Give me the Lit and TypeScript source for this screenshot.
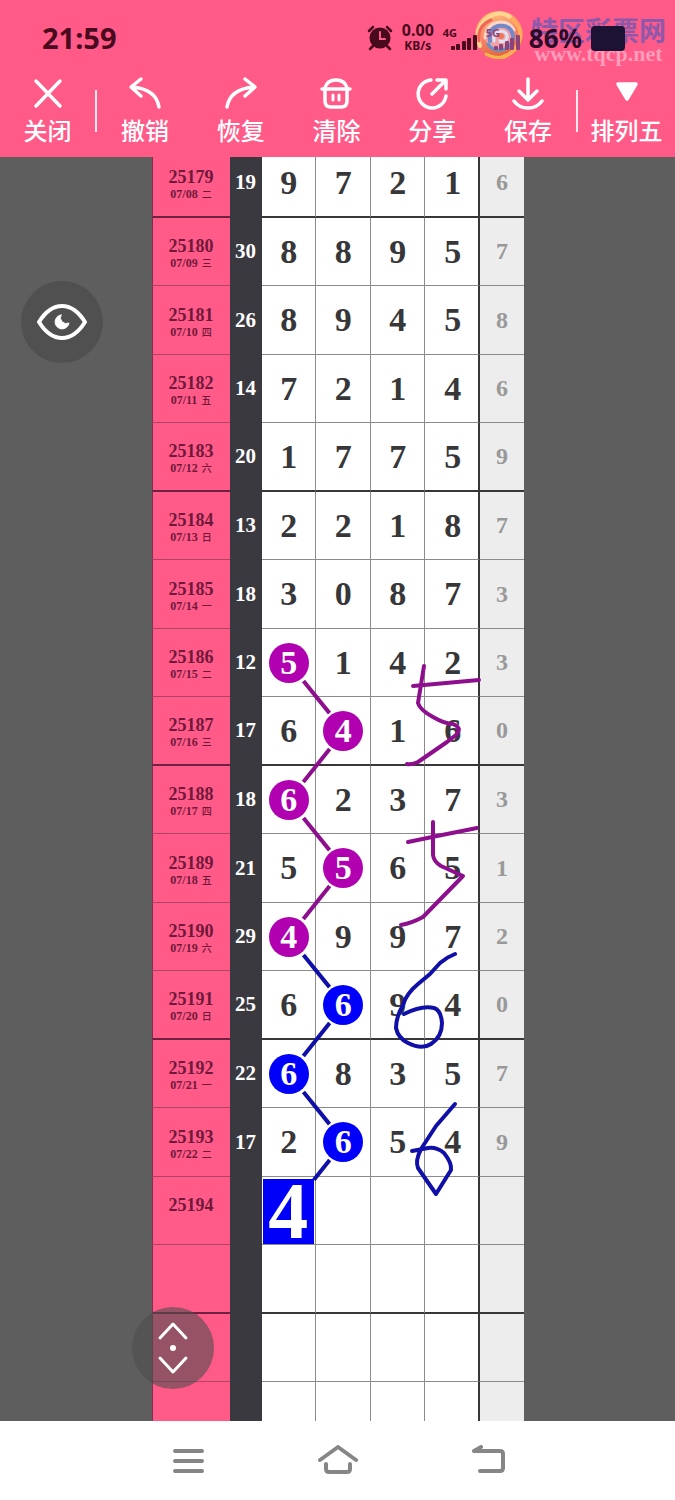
import { LitElement, html, svg, css, nothing } from 'lit';
import { customElement, property } from 'lit/decorators.js';

type Mark = { col: number; tone: 'purple' | 'blue'; box?: boolean };

interface Draw {
  issue: string;
  date: string;
  day: string;
  sum: string;
  digits: string;
  tail: string;
  mark?: Mark;
}

const draw = (issue: string, date: string, day: string, sum: string, digits: string, tail: string, mark?: Mark): Draw =>
  ({ issue, date, day, sum, digits, tail, mark });

const DRAWS: Draw[] = [
  draw('25179', '07/08', '二', '19', '9721', '6'),
  draw('25180', '07/09', '三', '30', '8895', '7'),
  draw('25181', '07/10', '四', '26', '8945', '8'),
  draw('25182', '07/11', '五', '14', '7214', '6'),
  draw('25183', '07/12', '六', '20', '1775', '9'),
  draw('25184', '07/13', '日', '13', '2218', '7'),
  draw('25185', '07/14', '一', '18', '3087', '3'),
  draw('25186', '07/15', '二', '12', '5142', '3', { col: 0, tone: 'purple' }),
  draw('25187', '07/16', '三', '17', '6416', '0', { col: 1, tone: 'purple' }),
  draw('25188', '07/17', '四', '18', '6237', '3', { col: 0, tone: 'purple' }),
  draw('25189', '07/18', '五', '21', '5565', '1', { col: 1, tone: 'purple' }),
  draw('25190', '07/19', '六', '29', '4997', '2', { col: 0, tone: 'purple' }),
  draw('25191', '07/20', '日', '25', '6694', '0', { col: 1, tone: 'blue' }),
  draw('25192', '07/21', '一', '22', '6835', '7', { col: 0, tone: 'blue' }),
  draw('25193', '07/22', '二', '17', '2654', '9', { col: 1, tone: 'blue' }),
  draw('25194', '', '', '', '4', '', { col: 0, tone: 'blue', box: true }),
  draw('', '', '', '', '', ''),
  draw('', '', '', '', '', ''),
  draw('', '', '', '', '', ''),
];

const CHART_WIDTH = 372;
const CHART_HEIGHT = 1302;

// Freehand strokes, in chart coordinates
const INK = [
  { tone: 'purple', d: 'M272 517L266 554Q268 561 281 568Q293 575 301 575Q311 579 304 586L295 593L266 613Q260 616 255 615' },
  { tone: 'purple', d: 'M261 537L327 531' },
  { tone: 'purple', d: 'M281 673V706Q282 713 289 717L311 727L271 768Q260 774 249 776' },
  { tone: 'purple', d: 'M256 693L285 687L325 679' },
  { tone: 'blue', d: 'M303 805Q295 808 288 814L278 825L266 835Q254 845 251 856Q244 868 244 879Q246 889 256 894Q270 901 279 895Q290 888 290 874Q289 861 282 859Q270 856 252 865' },
  { tone: 'blue', d: 'M303 955L284 977L269 1000Q263 1012 266 1019L284 1045L299 1021Q300 1014 292 1004Q285 998 276 999L260 1002' },
];

const center = (row: number, col: number) => ({ x: 137 + col * 55, y: 34 + Math.round(row * 68.5) });

@customElement('trend-chart')
export class TrendChart extends LitElement {
  static styles = css`
    :host {
      display: block;
      position: relative;
      width: 100%;
      max-width: 372px;
      color: #37373a;
      font-family: 'Liberation Serif', serif;
      font-weight: 700;
    }
    table {
      width: 100%;
      table-layout: fixed;
      border-collapse: separate;
      border-spacing: 0;
      background: #fff;
    }
    .w-issue { width: 78px; }
    .w-sum { width: 32px; }
    .w-tail { width: 44px; }
    tr { height: 68px; }
    tr:nth-child(odd) { height: 69px; }
    td, th {
      box-sizing: border-box;
      padding: 0;
      text-align: center;
      vertical-align: middle;
      border-bottom: 1px solid #8b8b8b;
    }
    tr:nth-child(4n + 1) > * {
      border-bottom: 2px solid #37373a;
    }
    .issue {
      padding-top: 3px;
      background: #ff5a88;
      color: #70183a;
      border-left: 1px solid #803050;
      border-bottom-color: #b04468;
      font-size: 18px;
      line-height: 20px;
    }
    tr:nth-child(4n + 1) > .issue {
      border-bottom-color: #702040;
    }
    .date {
      display: flex;
      justify-content: center;
      gap: 4px;
      height: 14px;
      font-size: 12px;
      line-height: 14px;
    }
    .day {
      font-family: 'Noto Sans CJK SC', sans-serif;
      font-size: 10px;
      font-weight: 500;
    }
    tr > .sum, tr:nth-child(4n + 1) > .sum {
      background: #3a3940;
      border-bottom-color: #3a3940;
      color: #fff;
      font-size: 21px;
    }
    .digit {
      padding-left: 1px;
      border-right: 1px solid #8b8b8b;
      font-size: 34px;
      line-height: 40px;
    }
    .digit.last {
      padding-left: 3px;
      border-right: 2px solid #37373a;
    }
    .tail {
      padding-left: 1px;
      background: #ededed;
      color: #999;
      font-size: 24px;
    }
    .ball {
      display: block;
      width: 40px;
      height: 40px;
      margin: 0 auto;
      border-radius: 50%;
      color: #fff;
    }
    .box {
      display: block;
      height: 65px;
      margin: 1px 1px 0 0;
      color: #fff;
      font-size: 80px;
      line-height: 65px;
    }
    .ball.purple { background: #b000b0; }
    .blue { background: #0000fa; }
    .ink {
      position: absolute;
      inset: 0;
      width: 100%;
      height: 100%;
      fill: none;
      stroke-width: 4;
      stroke-linejoin: round;
      pointer-events: none;
    }
    .ink path { stroke-linecap: round; }
    .ink .s-purple { stroke: #8e0f8e; }
    .ink .s-blue { stroke: #1010a8; }
  `;

  @property({ attribute: false }) draws: Draw[] = [];

  private renderDigit(d: Draw, col: number) {
    const value = d.digits[col] ?? '';
    const cls = col === 3 ? 'digit last' : 'digit';
    if (d.mark?.col !== col) return html`<td class=${cls}>${value}</td>`;
    return html`<td class=${cls}><span class="${d.mark.box ? 'box' : 'ball'} ${d.mark.tone}">${value}</span></td>`;
  }

  private renderLinks() {
    return this.draws.map((next, i) => {
      const prev = this.draws[i - 1];
      if (!prev?.mark || !next.mark) return nothing;
      const a = center(i - 1, prev.mark.col);
      const b = center(i, next.mark.col);
      const len = Math.hypot(b.x - a.x, b.y - a.y);
      const s = 23 / len;
      const e = (next.mark.box ? 40 : 23) / len;
      return svg`<line class="s-${next.mark.tone}"
        x1=${a.x + (b.x - a.x) * s} y1=${a.y + (b.y - a.y) * s}
        x2=${b.x - (b.x - a.x) * e} y2=${b.y - (b.y - a.y) * e} />`;
    });
  }

  render() {
    return html`
      <table>
        <colgroup>
          <col class="w-issue" /><col class="w-sum" />
          <col /><col /><col /><col />
          <col class="w-tail" />
        </colgroup>
        <tbody>
          ${this.draws.map((d) => html`
            <tr>
              <th class="issue" scope="row">
                ${d.issue}
                <div class="date"><span>${d.date}</span><span class="day">${d.day}</span></div>
              </th>
              <td class="sum">${d.sum}</td>
              ${[0, 1, 2, 3].map((col) => this.renderDigit(d, col))}
              <td class="tail">${d.tail}</td>
            </tr>
          `)}
        </tbody>
      </table>
      <svg class="ink" viewBox="0 0 ${CHART_WIDTH} ${CHART_HEIGHT}" preserveAspectRatio="none" aria-hidden="true">
        ${this.renderLinks()}
        ${INK.map((s) => svg`<path class="s-${s.tone}" d=${s.d} />`)}
      </svg>
    `;
  }
}

@customElement('status-bar')
export class StatusBar extends LitElement {
  static styles = css`
    :host {
      position: relative;
      display: flex;
      align-items: center;
      justify-content: space-between;
      height: 76px;
      padding: 0 50px 0 42px;
      box-sizing: border-box;
      color: #4a0a1e;
      font-family: 'Noto Sans', sans-serif;
      font-weight: 700;
    }
    svg { display: block; }
    .time {
      font-size: 29px;
      line-height: 32px;
    }
    .right {
      position: relative;
      z-index: 1;
      display: flex;
      align-items: center;
      gap: 9px;
    }
    .speed {
      display: flex;
      flex-direction: column;
      align-items: center;
      font-size: 16px;
      line-height: 15px;
    }
    .unit { font-size: 12px; }
    .signal {
      display: flex;
      flex-direction: column;
      width: 34px;
      font-size: 11px;
      line-height: 11px;
    }
    .signal svg { align-self: flex-end; margin-top: -4px; }
    .signal.second { color: #8c4478; }
    .battery-text { color: #2c0a28; font-size: 26px; line-height: 32px; }
    .battery {
      width: 34px;
      height: 25px;
      border-radius: 4px;
      background: #1c1234;
    }
    .watermark {
      position: absolute;
      top: 8px;
      right: 9px;
      display: flex;
      gap: 7px;
    }
    .brand {
      display: flex;
      flex-direction: column;
      align-items: center;
      padding-top: 8px;
    }
    .name {
      color: #8f59ab;
      font-family: 'Noto Sans CJK SC', sans-serif;
      font-size: 27px;
      line-height: 28px;
    }
    .site {
      color: #ff9dba;
      font-family: 'Liberation Serif', serif;
      font-size: 22px;
      line-height: 20px;
    }
  `;

  private bars() {
    return html`
      <svg width="26" height="16" viewBox="0 0 26 16" fill="currentColor" aria-hidden="true">
        <rect x="0" y="12" width="4" height="4" rx="1" /><rect x="5" y="10" width="4" height="6" rx="1" />
        <rect x="11" y="7" width="4" height="9" rx="1" /><rect x="16" y="4" width="4" height="12" rx="1" />
        <rect x="22" y="1" width="4" height="15" rx="1" />
      </svg>`;
  }

  render() {
    return html`
      <span class="time">21:59</span>
      <div class="right">
        <svg width="26" height="26" viewBox="0 0 26 26" fill="none" stroke="currentColor" stroke-width="3" stroke-linecap="round" aria-hidden="true">
          <circle cx="13" cy="13" r="10.5" fill="currentColor" stroke="none" />
          <path d="M2 6L6 2M24 6L20 2M6 21L3 24M20 21L23 24" stroke-width="2.5" />
          <path d="M13 7V14H18" stroke="#ff5a88" stroke-width="2" />
        </svg>
        <div class="speed"><span>0.00</span><span class="unit">KB/s</span></div>
        <div class="signal"><span>4G</span>${this.bars()}</div>
        <div class="signal second"><span>5G</span>${this.bars()}</div>
        <span class="battery-text">86%</span>
        <span class="battery"></span>
      </div>
      <div class="watermark">
        <svg width="52" height="54" viewBox="0 0 52 54" fill="none" stroke-linecap="round" aria-hidden="true">
          <defs>
            <linearGradient id="disc" x1="0.3" y1="0" x2="0.6" y2="1">
              <stop offset="0" stop-color="#ffc074" />
              <stop offset="0.5" stop-color="#f88468" />
              <stop offset="1" stop-color="#e0603c" />
            </linearGradient>
          </defs>
          <circle cx="27" cy="27" r="24" fill="url(#disc)" />
          <path d="M8 38Q1 20 17 9Q28 2 38 9" stroke="#ffd690" stroke-width="4" />
          <path d="M7 33Q5 18 19 12" stroke="#f36458" stroke-width="3" />
          <path d="M40 11Q52 21 47 34Q43 45 31 49" stroke="#ffaa5c" stroke-width="4" />
          <path d="M14 46Q24 52 34 48" stroke="#f0b848" stroke-width="3" />
          <circle cx="28" cy="28" r="15" fill="#f0a0a8" />
          <path d="M13 30Q14 15 29 14Q38 14 42 22" stroke="#f8d8c8" stroke-width="3" />
          <path d="M18 33Q16 21 26 18Q38 16 41 27Q42 36 35 40" stroke="#7388c8" stroke-width="4" />
          <path d="M16 36Q22 45 33 41" stroke="#5a94cc" stroke-width="3" />
          <path d="M22 33Q21 24 29 23Q36 24 35 30Q33 35 28 33" stroke="#dce4f4" stroke-width="3" />
          <circle cx="29" cy="28" r="3" fill="#f07858" />
        </svg>
        <div class="brand"><span class="name">特区彩票网</span><span class="site">www.tqcp.net</span></div>
      </div>
    `;
  }
}

const TOOLS = [
  { label: '撤销', icon: svg`<path d="M13 3L3 11L13 20M4 11Q28 13 31 31" />` },
  { label: '恢复', icon: svg`<path d="M21 3L31 11L21 20M30 11Q6 13 3 31" />` },
  { label: '清除', icon: svg`<path d="M3 13H31M6 12Q8 4 17 4Q26 4 28 12M6 14V25Q6 31 12 31H22Q28 31 28 25V14" /><path d="M14 19V24M20 19V24" stroke-width="3" />` },
  { label: '分享', icon: svg`<path d="M16 4A14 14 0 1 0 31 20M17 18L30 5M22 4H31V13" />` },
  { label: '保存', icon: svg`<path d="M17 3V23M8 15L17 24L26 15M3 25Q8 32 17 32Q26 32 31 25" />` },
];

@customElement('tool-bar')
export class ToolBar extends LitElement {
  static styles = css`
    :host {
      display: grid;
      grid-template-columns: 95px 2px repeat(5, 1fr) 2px 97px;
      height: 81px;
      color: #fff;
    }
    button {
      display: flex;
      flex-direction: column;
      align-items: center;
      gap: 4px;
      padding: 0;
      border: 0;
      background: none;
      color: inherit;
      font-family: 'Noto Sans CJK SC', sans-serif;
      font-size: 24px;
      font-weight: 500;
      line-height: 32px;
      white-space: nowrap;
    }
    svg {
      fill: none;
      stroke: currentColor;
      stroke-width: 3.5;
      stroke-linecap: round;
      stroke-linejoin: round;
    }
    .divider {
      height: 42px;
      margin-top: 14px;
      background: rgba(255, 255, 255, 0.85);
    }
  `;

  private item(label: string, icon: unknown) {
    return html`
      <button type="button">
        <svg width="34" height="34" viewBox="0 0 34 34" aria-hidden="true">${icon}</svg>
        ${label}
      </button>`;
  }

  render() {
    return html`
      ${this.item('关闭', svg`<path d="M5 5L29 30M29 5L5 30" />`)}
      <span class="divider"></span>
      ${TOOLS.map((t) => this.item(t.label, t.icon))}
      <span class="divider"></span>
      ${this.item('排列五', svg`<path d="M8 8H26L17 23Z" fill="currentColor" />`)}
    `;
  }
}

@customElement('app-root')
export class AppRoot extends LitElement {
  static styles = css`
    :host {
      display: flex;
      flex-direction: column;
      height: 100vh;
      background: #5e5e5e;
    }
    header {
      flex: none;
      background: #ff5a88;
    }
    main {
      position: relative;
      flex: 1;
      min-height: 0;
      overflow: hidden;
      display: flex;
      justify-content: center;
      align-items: flex-start;
    }
    trend-chart { margin-top: -8px; }
    .float {
      position: absolute;
      display: grid;
      place-items: center;
      width: 82px;
      height: 82px;
      padding: 0;
      border: 0;
      border-radius: 50%;
      background: rgba(78, 78, 78, 0.6);
      color: #fff;
    }
    .eye {
      top: 124px;
      left: 21px;
      background: #505050;
    }
    .scroll {
      bottom: 32px;
      left: 132px;
    }
    .float svg, nav svg {
      fill: none;
      stroke: currentColor;
      stroke-width: 4;
      stroke-linecap: round;
      stroke-linejoin: round;
    }
    nav {
      flex: none;
      display: flex;
      justify-content: center;
      height: 79px;
      background: #fff;
      color: #868686;
    }
    nav button {
      display: grid;
      place-items: center;
      width: 150px;
      padding: 0;
      border: 0;
      background: none;
      color: inherit;
    }
  `;

  render() {
    return html`
      <header>
        <status-bar></status-bar>
        <tool-bar></tool-bar>
      </header>
      <main>
        <trend-chart .draws=${DRAWS}></trend-chart>
        <button class="float eye" type="button" aria-label="显示">
          <svg width="52" height="38" viewBox="0 0 52 38">
            <path d="M3 19Q13 3 26 3Q39 3 49 19Q39 35 26 35Q13 35 3 19Z" />
            <path d="M25 12A7 7 0 1 0 33 20A6 6 0 0 1 25 12Z" fill="currentColor" stroke-width="1" />
          </svg>
        </button>
        <button class="float scroll" type="button" aria-label="滚动">
          <svg width="34" height="56" viewBox="0 0 34 56">
            <path d="M4 18L17 4L30 18M4 38L17 52L30 38" stroke-width="3" />
            <circle cx="17" cy="28" r="3" fill="currentColor" stroke="none" />
          </svg>
        </button>
      </main>
      <nav>
        <button type="button" aria-label="菜单">
          <svg width="40" height="32" viewBox="0 0 40 32"><path d="M7 6H34M7 16H34M7 26H34" /></svg>
        </button>
        <button type="button" aria-label="主页">
          <svg width="40" height="32" viewBox="0 0 40 32"><path d="M2 15L20 2L38 15M8 19V24Q8 27 11 27H29Q32 27 32 24V19" /></svg>
        </button>
        <button type="button" aria-label="返回">
          <svg width="40" height="32" viewBox="0 0 40 32"><path d="M13 2L6 6H32Q35 6 35 9V23Q35 26 32 26H12" /></svg>
        </button>
      </nav>
    `;
  }
}
